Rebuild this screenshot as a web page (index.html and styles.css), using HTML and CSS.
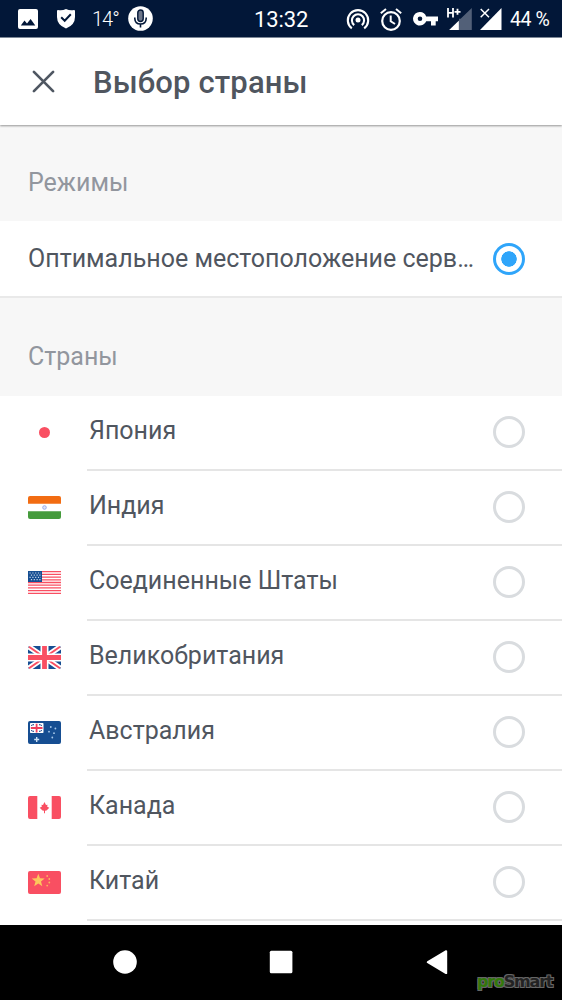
FILE: index.html
```html
<!DOCTYPE html>
<html lang="ru">
<head>
<meta charset="utf-8">
<title>Выбор страны</title>
<link rel="stylesheet" href="styles.css">
</head>
<body>
<div class="screen">
  <div class="status">
    <div class="status-left">
      <svg class="ic-image" viewBox="0 0 20 20"><path fill="#fff" fill-rule="evenodd" d="M2 0H18Q20 0 20 2V18Q20 20 18 20H2Q0 20 0 18V2Q0 0 2 0ZM2.8 16.5H17.3L12.6 10L9 14.4L6.5 11.6Z"/></svg>
      <svg class="ic-shield" viewBox="0 0 18 20"><path fill="#fff" d="M1 1Q5 2 9 0Q13 2 17 1Q18 1 18 2V8Q18 16 9 19.5Q0 16 0 8V2Q0 1 1 1Z"/><path fill="none" stroke="#021738" stroke-width="2" d="M4.2 8.2L7.7 11.7L13.8 5.3"/></svg>
      <span class="temp">14°</span>
      <svg class="ic-mic" viewBox="0 0 25 25"><circle cx="12.5" cy="12.5" r="12.3" fill="#fff"/><rect x="9.8" y="4" width="5.4" height="11.5" rx="2.7" fill="#6c7588" stroke="#021738" stroke-width="1.4"/><path fill="none" stroke="#021738" stroke-width="1.6" d="M6.8 11.5V12.5Q7 18 12.5 18Q18 18 18.2 12.5V11.5M12.5 18V21.5"/></svg>
    </div>
    <span class="clock">13:32</span>
    <div class="status-right">
      <svg class="ic-cast" viewBox="0 0 24 22"><circle cx="12" cy="12" r="2.5" fill="#fff"/><path fill="none" stroke="#fff" stroke-width="2.1" d="M8.2 17.1A6.1 6.1 0 1 1 15.8 17.1M5.8 20.4A10.2 10.2 0 1 1 18.2 20.4"/></svg>
      <svg class="ic-alarm" viewBox="0 0 22 23"><circle cx="11" cy="13" r="8.8" fill="none" stroke="#fff" stroke-width="2.2"/><path fill="none" stroke="#fff" stroke-width="2" d="M.8 5.3L6 1M16 1L21.2 5.3M10.7 7.5V13.3L15 16"/></svg>
      <svg class="ic-key" viewBox="0 0 25 14"><path fill="#fff" fill-rule="evenodd" d="M7 0A6.8 6.8 0 0 1 13.2 4.5H25V9.2H22.7V13.5H18V9.2H13.2A6.8 6.8 0 1 1 7 0ZM7 4.5A2.3 2.3 0 1 0 7 9.1A2.3 2.3 0 1 0 7 4.5Z"/></svg>
      <svg class="ic-net" viewBox="0 0 25 24"><path fill="#526078" d="M24.8 1V23H2.2L12 13.4V11.8H13.6Z"/><path fill="#fff" d="M11.8 13.7V23H2.2Z"/><path fill="none" stroke="#fff" stroke-width="1.8" d="M1 1V10.5M6 1V10.5M1 5.8H6M7.5 4.8H13.5M10.5 1.7V7.8"/></svg>
      <svg class="ic-sig" viewBox="0 0 22 24"><path fill="#fff" d="M21.5 1V23H0Z"/><path fill="none" stroke="#021738" stroke-width="3" d="M.5 2L9 10.5M9 2L.5 10.5"/><path fill="none" stroke="#fff" stroke-width="1.5" d="M.7 2L9 10.2M9 2L.7 10.2"/></svg>
      <span class="battery">44 %</span>
    </div>
  </div>

  <header class="header">
    <svg class="close" viewBox="0 0 24 24"><path stroke="#4f5762" stroke-width="2.8" stroke-linecap="round" d="M2 2L22 22M22 2L2 22"/></svg>
    <h1 class="title">Выбор страны</h1>
  </header>

  <main class="content">
    <h2 class="section modes">Режимы</h2>
    <div class="row optimal"><span class="label">Оптимальное местоположение серв…</span><i class="radio on"></i></div>
    <h2 class="section countries">Страны</h2>
    <div class="row country">
      <svg class="flag" viewBox="0 0 33 23"><circle cx="16.5" cy="11.5" r="5.5" fill="#f94f62"/></svg>
      <div class="cell"><span class="label">Япония</span><i class="radio"></i></div>
    </div>
    <div class="row country">
      <svg class="flag" viewBox="0 0 33 23"><path fill="#f26c12" d="M0 7.7V2Q0 0 2 0H31Q33 0 33 2V7.7Z"/><path fill="#459b3c" d="M0 15.3V21Q0 23 2 23H31Q33 23 33 21V15.3Z"/><circle cx="16.5" cy="11.5" r="1.8" fill="#dfe5f8" stroke="#9aabea"/></svg>
      <div class="cell"><span class="label">Индия</span><i class="radio"></i></div>
    </div>
    <div class="row country">
      <svg class="flag" viewBox="0 0 33 23"><path fill="none" stroke="#f94f62" stroke-width="1.3" d="M0 .7H33M0 3.4H33M0 6.1H33M0 8.8H33M0 11.5H33M0 14.2H33M0 16.9H33M0 19.6H33M0 22.3H33"/><path fill="#164e92" d="M0 0H14V11H0Z"/><path fill="none" stroke="#c5d4e8" stroke-width="1.2" stroke-dasharray="1.2 1.6" d="M1.5 2H13M2.9 4.2H13M1.5 6.4H13M2.9 8.6H13"/></svg>
      <div class="cell"><span class="label">Соединенные Штаты</span><i class="radio"></i></div>
    </div>
    <div class="row country">
      <svg class="flag" viewBox="0 0 33 23"><rect width="33" height="23" rx="2" fill="#164e92"/><path stroke="#fff" stroke-width="5.4" d="M1 .8L32 22.2M32 .8L1 22.2"/><path stroke="#f94f62" stroke-width="2" d="M1 .8L32 22.2M32 .8L1 22.2"/><path stroke="#fff" stroke-width="8" d="M16.5 0V23M0 11.5H33"/><path stroke="#f94f62" stroke-width="4.8" d="M16.5 0V23M0 11.5H33"/></svg>
      <div class="cell"><span class="label">Великобритания</span><i class="radio"></i></div>
    </div>
    <div class="row country">
      <svg class="flag" viewBox="0 0 33 23"><rect width="33" height="23" rx="2" fill="#164e92"/><rect x="2" y="2" width="13.5" height="10" rx=".7" fill="#fff"/><path fill="#41659f" d="M3 3H6V5.2H3ZM11 3H14V5.2H11ZM3 9H6V11H3ZM11 9H14V11H11Z"/><path stroke="#fff" stroke-width="1" d="M3 3L14 11M14 3L3 11"/><path stroke="#fff" stroke-width="4" d="M8.6 2.5V11.5M2.5 7H15"/><path stroke="#f0405c" stroke-width="1.8" d="M8.6 2.8V11.4M2.8 7H14.5"/><path stroke="#cbe0f5" stroke-width="1.4" d="M8.7 16V21M6.2 18.5H11.2"/><g fill="#a9c9ea"><circle cx="22.8" cy="6" r=".9"/><circle cx="27.4" cy="7.5" r=".9"/><circle cx="21" cy="10.7" r=".9"/><circle cx="26" cy="12.2" r=".9"/><circle cx="24.3" cy="16.5" r=".9"/></g></svg>
      <div class="cell"><span class="label">Австралия</span><i class="radio"></i></div>
    </div>
    <div class="row country">
      <svg class="flag" viewBox="0 0 33 23"><path fill="#f94f62" d="M9.3 0V23H2Q0 23 0 21V2Q0 0 2 0ZM23.7 0H31Q33 0 33 2V21Q33 23 31 23H23.7ZM16.5 6L18 9L19.5 8.7L19.2 10.8L21.3 11.7L18.5 14.5L17 14.8V17.2H16V14.8L14.5 14.5L11.7 11.7L13.8 10.8L13.5 8.7L15 9Z"/></svg>
      <div class="cell"><span class="label">Канада</span><i class="radio"></i></div>
    </div>
    <div class="row country">
      <svg class="flag" viewBox="0 0 33 23"><rect width="33" height="23" rx="2" fill="#f94f62"/><path fill="#fcc75c" d="M10.3 2.8L12 7.3L16.7 7.5L13 10.5L14.3 15.3L10.3 12.6L6.2 15.3L7.5 10.5L3.7 7.5L8.6 7.3Z"/><g fill="#fcb45c"><circle cx="19.2" cy="5" r=".9"/><circle cx="21.3" cy="8" r=".9"/><circle cx="21.3" cy="11.5" r=".9"/><circle cx="19.2" cy="14.6" r=".9"/></g></svg>
      <div class="cell"><span class="label">Китай</span><i class="radio"></i></div>
    </div>
  </main>

  <nav class="nav">
    <svg class="nav-icon" viewBox="0 0 24 24"><circle cx="12" cy="12" r="11.8" fill="#fff"/></svg>
    <svg class="nav-icon" viewBox="0 0 24 24"><rect x=".8" y=".8" width="22.6" height="22.4" rx="1.5" fill="#fff"/></svg>
    <svg class="nav-icon" viewBox="0 0 24 24"><path fill="#fff" stroke="#fff" stroke-width="2" stroke-linejoin="round" d="M2.8 12.2L21.2 1.2V23.2Z"/></svg>
    <span class="mark"><b class="mark-pro">pro</b>Smart</span>
  </nav>
</div>
</body>
</html>
```
FILE: styles.css
```css
* { box-sizing: border-box; }
body { margin: 0; font-family: Roboto, "Liberation Sans", sans-serif; color: #50565f; background: #fff; }
svg { display: block; flex: none; }
.screen { position: relative; width: 562px; height: 1000px; display: flex; flex-direction: column; overflow: hidden; }

.status { height: 38px; flex: none; display: flex; align-items: flex-start; justify-content: space-between; background: #021738; border-bottom: 1px solid #808b9b; color: #fff; line-height: 38px; white-space: nowrap; }
.status-left { width: 254px; display: flex; padding-left: 18px; }
.ic-image { width: 20px; height: 20px; margin-top: 9px; }
.ic-shield { width: 18px; height: 20px; margin: 9px 0 0 19px; }
.temp { width: 36px; margin-left: 17px; font-size: 20px; font-weight: 300; letter-spacing: -1px; }
.ic-mic { width: 25px; height: 25px; margin-top: 6px; }
.clock { width: 92px; font-size: 22px; line-height: 39px; letter-spacing: -.1px; }
.status-right { display: flex; flex: 1; }
.ic-cast { width: 24px; height: 22px; margin-top: 8px; }
.ic-alarm { width: 22px; height: 23px; margin: 8px 0 0 10px; }
.ic-key { width: 25px; height: 14px; margin: 12px 0 0 11px; }
.ic-net { width: 25px; height: 24px; margin: 7px 0 0 9px; }
.ic-sig { width: 22px; height: 24px; margin: 7px 0 0 8px; }
.battery { margin-left: 8px; font-size: 19.5px; line-height: 39px; letter-spacing: -.4px; }

.header { position: relative; height: 87px; flex: none; display: flex; align-items: center; padding-left: 32px; background: #fff; box-shadow: 0 1px 2px rgba(0, 0, 0, .4); z-index: 1; }
.close { width: 23px; height: 23px; }
.title { margin: 3px 0 0 38px; font-size: 31px; line-height: 40px; font-weight: 500; letter-spacing: .14px; white-space: nowrap; }

.content { flex: 1; overflow: hidden; }
.section { margin: 0; padding-left: 28px; background: #f7f7f7; color: #92969e; font-size: 25px; font-weight: 400; }
.modes { height: 96px; line-height: 115px; }
.countries { height: 98px; line-height: 118px; }
.row { display: flex; align-items: center; height: 75px; font-size: 25px; white-space: nowrap; }
.optimal { height: 77px; padding: 0 37px 0 28px; justify-content: space-between; border-bottom: 2px solid #e9e9e9; }
.country { padding-left: 28px; }
.flag { width: 33px; height: 23px; margin: 0 26px 2px 0; }
.cell { flex: 1; height: 75px; display: flex; align-items: center; justify-content: space-between; padding: 0 37px 0 2px; border-bottom: 2px solid #e5e5e5; }
.cell .label { margin-top: -4px; }
.radio { width: 32px; height: 32px; flex: none; border: 3px solid #d9dcdf; border-radius: 50%; }
.cell .radio { margin-bottom: 1px; }
.on { border-color: #2fa5fa; background: radial-gradient(circle, #2fa5fa 7.4px, transparent 8px); }

.nav { position: relative; height: 75px; flex: none; display: flex; align-items: center; gap: 132px; padding: 0 0 1px 113px; background: #000; }
.nav-icon { width: 24px; height: 24px; }
.mark { position: absolute; left: 477px; top: 47px; color: #222; font: bold 16px/20px "DejaVu Sans", sans-serif; letter-spacing: -1.2px; text-shadow: -1px -1px #666, 1px -1px #666, -1px 1px #666, 1px 1px #666; }
.mark-pro { color: #32780b; }
```
